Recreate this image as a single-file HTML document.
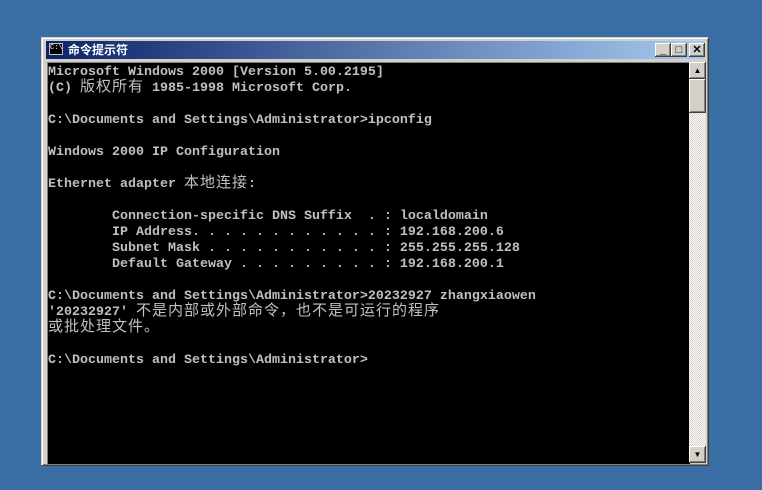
<!DOCTYPE html>
<html><head><meta charset="utf-8"><style>
body{margin:0;width:762px;height:490px;background:#3a6ea5;position:relative;overflow:hidden}
.win{position:absolute;left:41px;top:37px;width:668px;height:429px;background:#d4d0c8;box-sizing:border-box;border-top:1px solid #d4d0c8;border-left:1px solid #d4d0c8;border-right:1px solid #404040;border-bottom:1px solid #404040;box-shadow:inset 1px 1px 0 #fff,inset -1px -1px 0 #808080}
.title{position:absolute;left:4px;top:3px;width:658px;height:18px;background:linear-gradient(90deg,#0a246a,#a6caf0)}
.title .t{position:absolute;left:22px;top:1px;color:#fff;font:bold 12px "Liberation Sans","Noto Sans CJK SC",sans-serif;line-height:16px}
.icon{position:absolute;left:3px;top:2px;width:14px;height:12px;background:#000;border:1px solid #c0c0c0;box-sizing:border-box;color:#fff;font:7px "Liberation Mono",monospace;line-height:8px}
.btn{position:absolute;top:2px;width:16px;height:14px;background:#d4d0c8;box-sizing:border-box;box-shadow:inset -1px -1px 0 #404040,inset 1px 1px 0 #fff,inset -2px -2px 0 #808080;font:bold 11px "Liberation Sans",sans-serif;text-align:center;line-height:14px;color:#000}
.con{position:absolute;left:5px;top:24px;width:642px;height:401px;background:#000;border-top:1px solid #808080;border-left:1px solid #808080}
.sb{position:absolute;left:647px;top:24px;width:17px;height:401px;background-color:#ece9e4;background-image:repeating-conic-gradient(#d4d0c8 0 25%,#fff 0 50%);background-size:2px 2px}
.sbb{position:absolute;left:0;width:17px;height:17px;background:#d4d0c8;box-sizing:border-box;box-shadow:inset -1px -1px 0 #404040,inset 1px 1px 0 #fff,inset -2px -2px 0 #808080}
.l{position:absolute;left:0px;height:16px;overflow:visible;color:#c0c0c0;font:bold 13.33px "Liberation Mono",monospace;line-height:16px;white-space:pre}
.c{line-height:0;vertical-align:baseline;font-family:"Noto Sans CJK SC",sans-serif;font-size:15px;letter-spacing:1px;font-weight:normal}
</style></head><body>
<div class="win">
<div class="title"><div class="icon">C:\</div><div class="t">命令提示符</div>
<div class="btn" style="left:609px">_</div><div class="btn" style="left:625px">□</div><div class="btn" style="left:643px">✕</div></div>
<div class="con">
<div class="l" style="top:2px">Microsoft Windows 2000 [Version 5.00.2195]</div>
<div class="l" style="top:18px">(C) <span class="c">版权所有</span> 1985-1998 Microsoft Corp.</div>
<div class="l" style="top:50px">C:\Documents and Settings\Administrator>ipconfig</div>
<div class="l" style="top:82px">Windows 2000 IP Configuration</div>
<div class="l" style="top:114px">Ethernet adapter <span class="c">本地连接</span>:</div>
<div class="l" style="top:146px">        Connection-specific DNS Suffix  . : localdomain</div>
<div class="l" style="top:162px">        IP Address. . . . . . . . . . . . : 192.168.200.6</div>
<div class="l" style="top:178px">        Subnet Mask . . . . . . . . . . . : 255.255.255.128</div>
<div class="l" style="top:194px">        Default Gateway . . . . . . . . . : 192.168.200.1</div>
<div class="l" style="top:226px">C:\Documents and Settings\Administrator>20232927 zhangxiaowen</div>
<div class="l" style="top:242px">'20232927' <span class="c">不是内部或外部命令，也不是可运行的程序</span></div>
<div class="l" style="top:258px"><span class="c">或批处理文件。</span></div>
<div class="l" style="top:290px">C:\Documents and Settings\Administrator></div>
</div>
<div class="sb">
<div class="sbb" style="top:0;font:8px sans-serif;text-align:center;line-height:17px">▲</div>
<div class="sbb" style="top:17px;height:34px"></div>
<div class="sbb" style="top:384px;font:8px sans-serif;text-align:center;line-height:17px">▼</div>
</div>
</div>
</body></html>
